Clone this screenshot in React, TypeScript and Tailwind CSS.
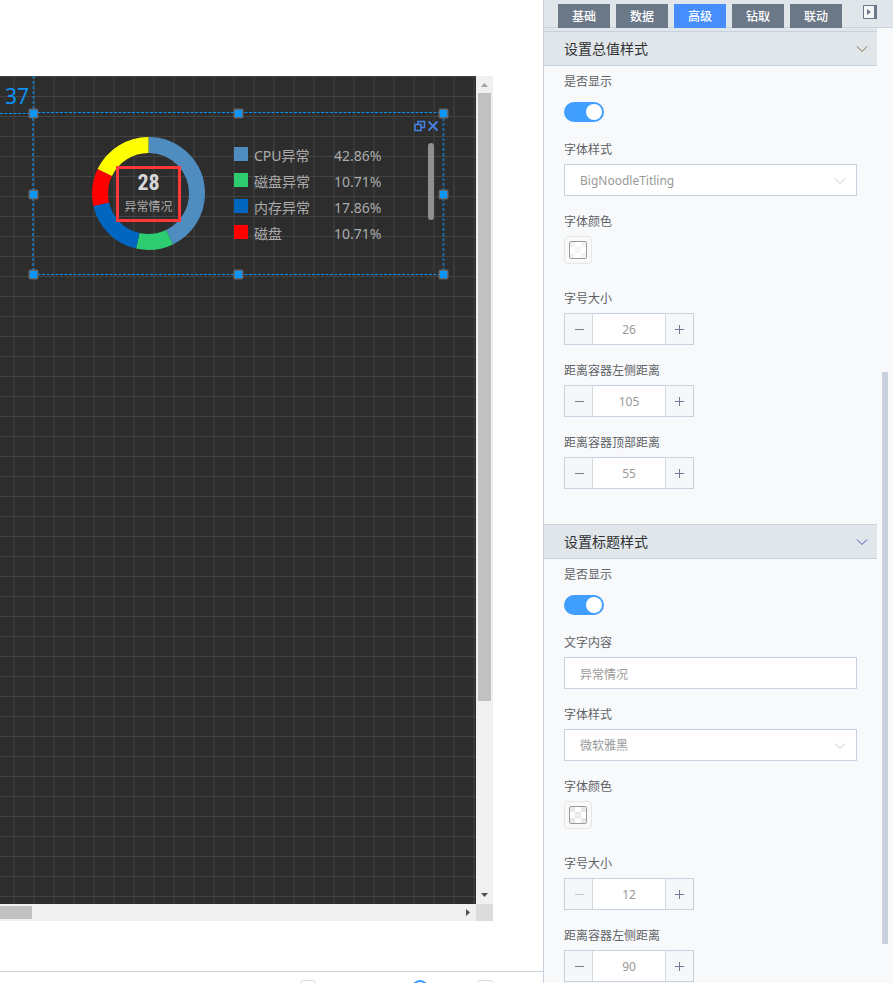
import { useId, useState } from 'react';
import type { ReactNode } from 'react';

type LegendItem = { name: string; percent: string; swatch: string };

const legend: LegendItem[] = [
  { name: 'CPU异常', percent: '42.86%', swatch: 'bg-[#4f8dc0]' },
  { name: '磁盘异常', percent: '10.71%', swatch: 'bg-[#2ecc71]' },
  { name: '内存异常', percent: '17.86%', swatch: 'bg-[#0066bf]' },
  { name: '磁盘', percent: '10.71%', swatch: 'bg-[#ff0000]' },
];

const slices = [
  { value: 42.86, color: '#4f8dc0' },
  { value: 10.71, color: '#2ecc71' },
  { value: 17.86, color: '#0066bf' },
  { value: 10.71, color: '#ff0000' },
  { value: 17.86, color: '#ffff00' },
];

const tabs = ['基础', '数据', '高级', '钻取', '联动'];

function Donut() {
  const radius = 48.5;
  let start = 0;
  return (
    <svg className="absolute left-[91px] top-[60px] h-[115px] w-[115px]" viewBox="0 0 115 115" aria-hidden="true">
      <g transform="rotate(-90 57.5 57.5)" fill="none" strokeWidth="16">
        {slices.map((slice) => {
          const offset = -start;
          start += slice.value;
          return (
            <circle
              key={slice.color}
              cx="57.5"
              cy="57.5"
              r={radius}
              pathLength="100"
              stroke={slice.color}
              strokeDasharray={`${slice.value} ${100 - slice.value}`}
              strokeDashoffset={offset}
            />
          );
        })}
      </g>
    </svg>
  );
}

function Selection() {
  const handles = [
    [33, 37], [238, 37], [443, 37],
    [33, 118], [443, 118],
    [33, 198], [238, 198], [443, 198],
  ];
  return (
    <svg className="absolute left-0 top-0 h-[210px] w-[460px]" viewBox="0 0 460 210" aria-hidden="true">
      <g fill="none" stroke="#0a91f5">
        <path d="M0 37.5H33M33 36.5H443M33 198.5H443" strokeDasharray="3 1.5" />
        <path d="M33.5 0V37M443.5 37V198M33 37V198" strokeWidth="2" strokeOpacity="0.6" strokeDasharray="3 2" />
      </g>
      {handles.map(([x, y]) => (
        <g key={`${x}-${y}`}>
          <rect x={x - 4.5} y={y - 4.5} width="10" height="10" rx="2" fill="#6d7175" fillOpacity="0.85" />
          <rect x={x - 3} y={y - 3} width="7" height="7" fill="#0a96fb" />
        </g>
      ))}
    </svg>
  );
}

function Canvas() {
  return (
    <div className="relative overflow-hidden bg-[#2d2d2d] bg-[linear-gradient(#434343_1px,transparent_1px),linear-gradient(90deg,transparent_13px,#383838_13px,#383838_15px,transparent_15px)] bg-[size:20px_20px] font-['Noto_Sans','Noto_Sans_CJK_SC',sans-serif]">
      <span className="absolute left-[5px] top-1.5 text-[21px] leading-7 text-[#0a91f5]">37</span>
      <Donut />
      <div className="absolute left-[116px] top-[90px] flex h-14 w-[65px] flex-col items-center border-[3px] border-[#fd3838]">
        <strong className="font-['Roboto_Condensed','Open_Sans_Condensed',Roboto,sans-serif] text-[22px] leading-7 text-[#d8d8d8]">28</strong>
        <span className="whitespace-nowrap text-[12px] leading-5 text-[#a9a9a9]">异常情况</span>
      </div>
      <ul className="absolute left-[234px] top-[67px] text-[14px] leading-[26px] text-[#ababab]">
        {legend.map((item) => (
          <li key={item.name} className="flex h-[26px] items-center">
            <span className={`mb-1 mr-1.5 h-3.5 w-3.5 ${item.swatch}`} />
            <span className="w-20">{item.name}</span>
            <span>{item.percent}</span>
          </li>
        ))}
      </ul>
      <div className="absolute left-[428px] top-[67px] h-[77px] w-1.5 rounded-full bg-[#8f8f8f]" />
      <div className="absolute left-[414px] top-11 flex gap-0.5 text-[#4584e6]">
        <button type="button" aria-label="复制">
          <svg className="h-3 w-3" viewBox="0 0 12 12" fill="none" stroke="currentColor" strokeWidth="1.5">
            <path d="M1 4.5h6v6H1zM4 4.5V1.5h6.5v6H7" />
          </svg>
        </button>
        <button type="button" aria-label="关闭">
          <svg className="h-3 w-3" viewBox="0 0 12 12" fill="none" stroke="currentColor" strokeWidth="1.8">
            <path d="M0.5 1.5l9 9M9.5 1.5l-9 9" />
          </svg>
        </button>
      </div>
      <Selection />
    </div>
  );
}

function Workspace() {
  return (
    <main className="flex min-w-0 flex-1 flex-col bg-white">
      <div className="grid min-h-0 flex-1 grid-cols-[1fr_17px] grid-rows-[1fr_17px] pb-[50px] pr-[50px] pt-[76px]">
        <Canvas />
        <div className="flex flex-col items-center bg-[#f0f0f0]">
          <svg className="h-[17px] w-[17px] shrink-0" viewBox="0 0 17 17" fill="#a3a3a3" aria-hidden="true">
            <path d="M5 11h7L8.500 7z" />
          </svg>
          <div className="h-[608px] w-[13px] bg-[#c1c1c1]" />
          <svg className="mt-auto h-[17px] w-[17px] shrink-0" viewBox="0 0 17 17" fill="#505050" aria-hidden="true">
            <path d="M5 6h7L8.500 10z" />
          </svg>
        </div>
        <div className="flex items-center bg-[#f0f0f0]">
          <div className="h-[13px] w-8 bg-[#c1c1c1]" />
          <svg className="ml-auto h-[17px] w-[17px]" viewBox="0 0 17 17" fill="#505050" aria-hidden="true">
            <path d="M7 5v7l4-3.500z" />
          </svg>
        </div>
        <div className="bg-[#dcdcdc]" />
      </div>
      <footer className="flex h-3 items-start justify-end overflow-hidden border-t border-[#c8d0dc] pr-[50px] pt-2">
        <button type="button" aria-label="缩小" className="h-4 w-4 shrink-0 rounded-[3px] border border-[#d8dce6]" />
        <input
          type="range"
          aria-label="缩放"
          defaultValue={66}
          className="h-4 w-[161px] appearance-none bg-transparent [&::-webkit-slider-thumb]:h-4 [&::-webkit-slider-thumb]:w-4 [&::-webkit-slider-thumb]:appearance-none [&::-webkit-slider-thumb]:rounded-full [&::-webkit-slider-thumb]:border-2 [&::-webkit-slider-thumb]:border-[#409eff] [&::-webkit-slider-thumb]:bg-white"
        />
        <button type="button" aria-label="放大" className="h-4 w-4 shrink-0 rounded-[3px] border border-[#d8dce6]" />
      </footer>
    </main>
  );
}

function Field({ label, children }: { label: string; children: (id: string) => ReactNode }) {
  const id = useId();
  return (
    <div>
      <label htmlFor={id} className="block h-[30px] text-[12px] leading-8 text-[#606266]">{label}</label>
      {children(id)}
    </div>
  );
}

function ToggleField({ label }: { label: string }) {
  return (
    <Field label={label}>
      {(id) => (
        <div className="flex h-[38px] pt-1.5">
          <input
            id={id}
            type="checkbox"
            defaultChecked
            className="h-5 w-10 appearance-none rounded-full bg-[#c0c4cc] p-0.5 before:block before:h-4 before:w-4 before:rounded-full before:bg-white checked:bg-[#409eff] checked:pl-[22px]"
          />
        </div>
      )}
    </Field>
  );
}

function Chevron({ className }: { className: string }) {
  return (
    <svg className={className} viewBox="0 0 12 8" fill="none" stroke="currentColor" aria-hidden="true">
      <path d="M1 1.500l5 5 5-5" />
    </svg>
  );
}

function SelectField({ label, value }: { label: string; value: string }) {
  return (
    <Field label={label}>
      {(id) => (
        <div className="relative mb-2.5">
          <select id={id} className="block h-8 w-full appearance-none border border-[#c8d1de] bg-white px-[15px] pt-0.5 text-[12px] text-[#999]">
            <option>{value}</option>
          </select>
          <Chevron className="pointer-events-none absolute right-[11px] top-[13px] h-2 w-3 text-[#c0c4cc]" />
        </div>
      )}
    </Field>
  );
}

function TextField({ label, value }: { label: string; value: string }) {
  return (
    <Field label={label}>
      {(id) => (
        <input id={id} defaultValue={value} className="mb-2.5 block h-8 w-full border border-[#c8d1de] bg-white px-[15px] pt-0.5 text-[12px] text-[#999]" />
      )}
    </Field>
  );
}

function ColorField({ label, tile }: { label: string; tile: string }) {
  return (
    <Field label={label}>
      {(id) => (
        <button id={id} type="button" className="mb-[19px] flex h-7 w-7 items-center justify-center rounded border border-[#e6e6e6]">
          <span className="flex h-[18px] w-[18px] overflow-hidden rounded-xs border border-[#999] bg-white">
            <svg className="h-4 w-4" viewBox="0 0 16 16" aria-hidden="true">
              <path fill={tile} d="M0 0h5v5H0zM11 0h5v5h-5zM5 5h6v6H5zM0 11h5v5H0zM11 11h5v5h-5z" />
              <path fill="none" stroke="#fff" strokeOpacity="0.7" d="M5.500 6.500l2.500 2.500 2.500-2.500" />
            </svg>
          </span>
        </button>
      )}
    </Field>
  );
}

function StepperField({ label, value, min = 0 }: { label: string; value: number; min?: number }) {
  const [current, setCurrent] = useState(value);
  const atMin = current <= min;
  return (
    <Field label={label}>
      {(id) => (
        <div className="mb-2.5 flex h-8 w-[130px] border border-[#c8d1de] bg-white">
          <button
            type="button"
            aria-label="减少"
            disabled={atMin}
            onClick={() => setCurrent(current - 1)}
            className="flex w-7 items-center justify-center border-r border-[#d3d9e3] bg-[#f5f7fa] pl-0.5 text-[#7d7f86] disabled:text-[#c0c4cc]"
          >
            <svg className="h-[9px] w-[9px]" viewBox="0 0 9 9" stroke="currentColor" aria-hidden="true">
              <path d="M0 4.500h9" />
            </svg>
          </button>
          <input
            id={id}
            value={current}
            onChange={(event) => setCurrent(Number(event.target.value) || 0)}
            className="w-0 flex-1 pt-0.5 text-center text-[12px] text-[#999]"
          />
          <button
            type="button"
            aria-label="增加"
            onClick={() => setCurrent(current + 1)}
            className="flex w-7 items-center justify-center border-l border-[#d3d9e3] bg-[#f5f7fa] text-[#76789a]"
          >
            <svg className="h-[9px] w-[9px]" viewBox="0 0 9 9" stroke="currentColor" aria-hidden="true">
              <path d="M0 4.500h9M4.500 0v9" />
            </svg>
          </button>
        </div>
      )}
    </Field>
  );
}

function Section({ title, tone, children }: { title: string; tone: string; children: ReactNode }) {
  return (
    <section>
      <h2 className="h-[35px] border-y border-[#c8d1de] bg-[#e1e6ea]">
        <button type="button" className="flex h-full w-full items-center justify-between pl-5 pr-[9px] text-[14px] text-[#303133]">
          {title}
          <Chevron className={`h-2 w-3 ${tone}`} />
        </button>
      </h2>
      <div className="px-5 pb-[25px]">{children}</div>
    </section>
  );
}

function SettingsPanel() {
  const [active, setActive] = useState('高级');
  return (
    <aside className="flex w-[350px] shrink-0 flex-col border-l border-[#c8d1dc] bg-[#f7f9fb]">
      <nav className="flex h-7 shrink-0 items-end gap-1.5 bg-[#e1e6ea] pl-3.5 pr-4 shadow-[inset_0_-1px_0_#c8d1de]">
        {tabs.map((tab) => (
          <button
            key={tab}
            type="button"
            onClick={() => setActive(tab)}
            className={`h-6 w-[52px] pt-0.5 text-[12px] font-medium text-white ${tab === active ? 'bg-[#458efc]' : 'bg-[#6b7888]'}`}
          >
            {tab}
          </button>
        ))}
        <button type="button" aria-label="收起" className="mb-[9px] ml-auto">
          <svg className="h-3.5 w-3.5" viewBox="0 0 14 14" aria-hidden="true">
            <path fill="#f3f5f7" stroke="#6b7888" d="M0.500 0.500h13v13H0.500z" />
            <path fill="#6b7888" d="M11 0h3v14h-3zM4 4l4 3-4 3z" />
          </svg>
        </button>
      </nav>
      <div className="flex min-h-0 flex-1">
        <div className="min-w-0 flex-1 overflow-hidden border-t-[3px] border-[#e1e6ea]">
          <Section title="设置总值样式" tone="text-[#8a7040]">
            <ToggleField label="是否显示" />
            <SelectField label="字体样式" value="BigNoodleTitling" />
            <ColorField label="字体颜色" tile="#f3f3f3" />
            <StepperField label="字号大小" value={26} />
            <StepperField label="距离容器左侧距离" value={105} />
            <StepperField label="距离容器顶部距离" value={55} />
          </Section>
          <Section title="设置标题样式" tone="text-[#4a55b8]">
            <ToggleField label="是否显示" />
            <TextField label="文字内容" value="异常情况" />
            <SelectField label="字体样式" value="微软雅黑" />
            <ColorField label="字体颜色" tile="#e8e8e8" />
            <StepperField label="字号大小" value={12} min={12} />
            <StepperField label="距离容器左侧距离" value={90} />
          </Section>
        </div>
        <div className="w-4 shrink-0 pl-[5px] pt-[344px]">
          <div className="h-[572px] w-1.5 bg-[#c8d1de]" />
        </div>
      </div>
    </aside>
  );
}

export default function App() {
  return (
    <div className="flex h-screen overflow-hidden font-['Noto_Sans','Noto_Sans_CJK_SC',sans-serif]">
      <Workspace />
      <SettingsPanel />
    </div>
  );
}
